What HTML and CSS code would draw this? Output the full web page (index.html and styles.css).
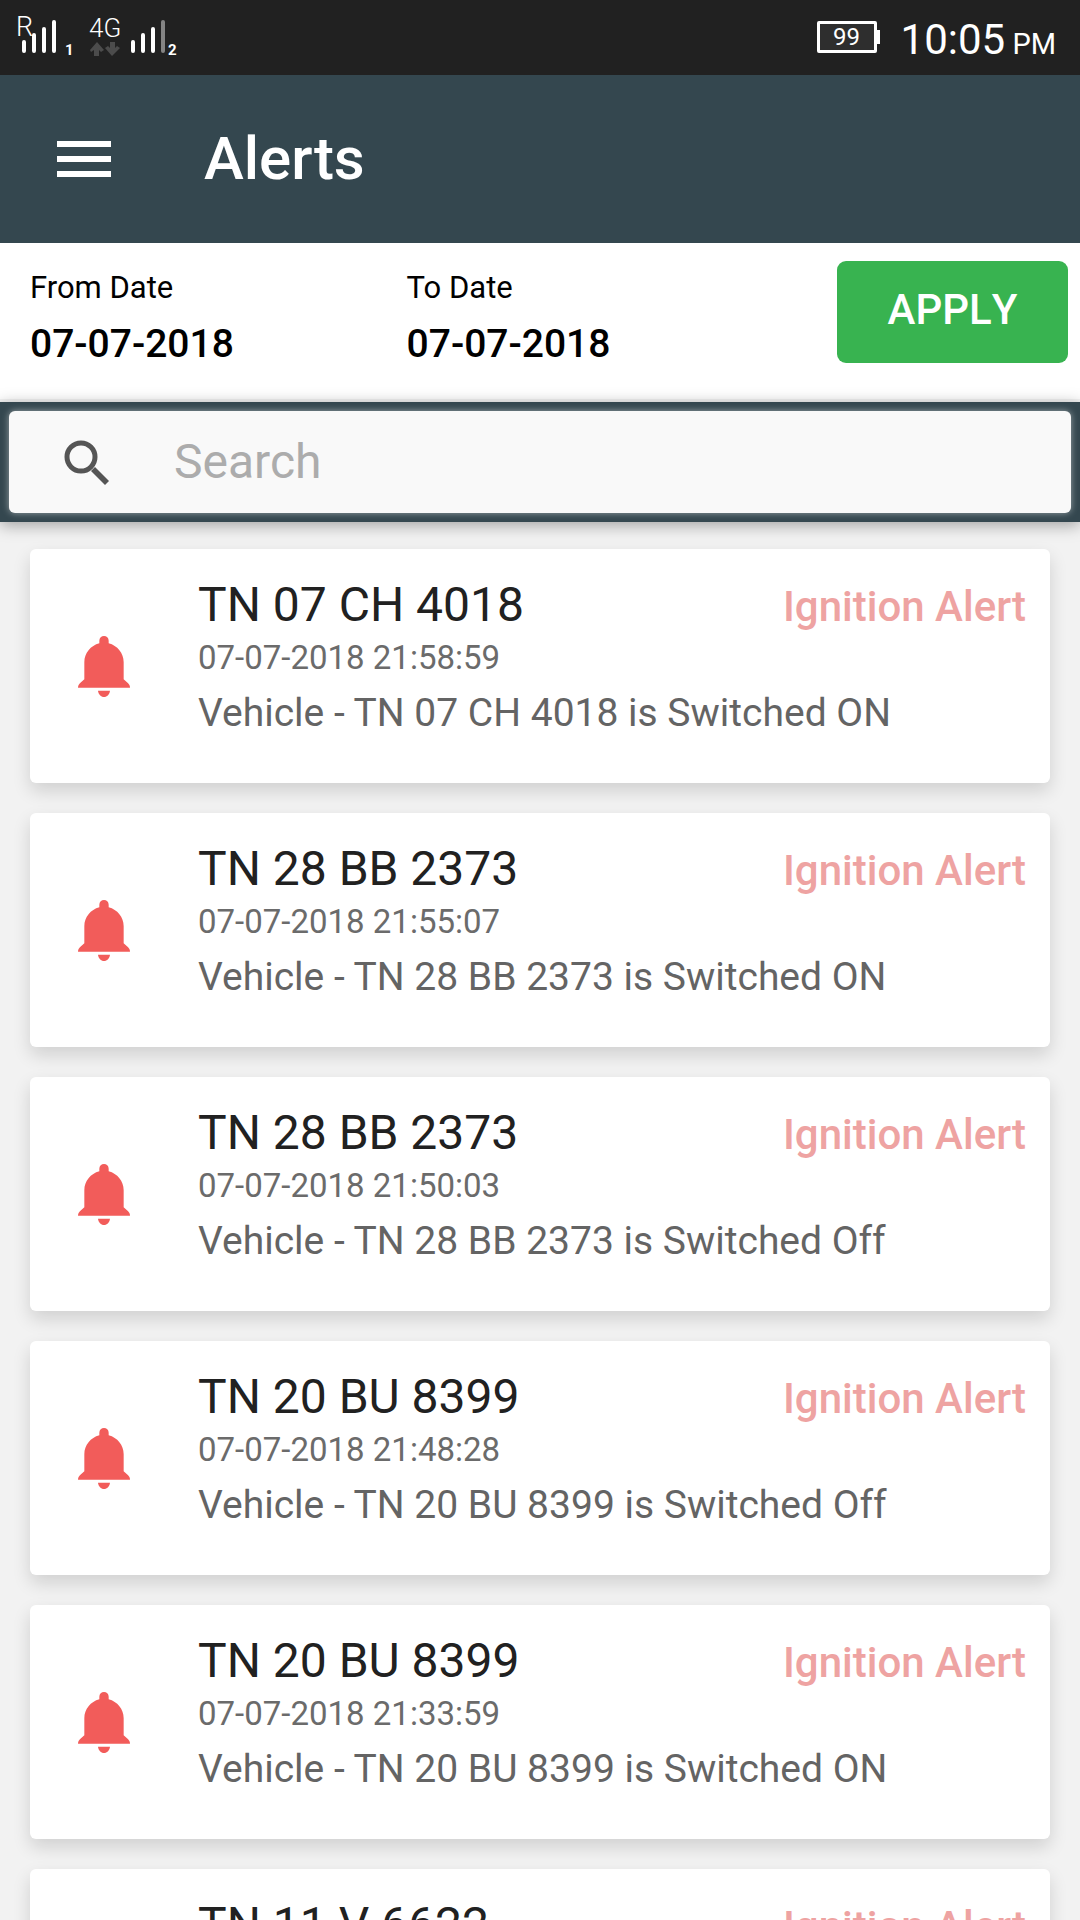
FILE: index.html
```html
<!DOCTYPE html>
<html lang="en">
<head>
<meta charset="utf-8">
<meta name="viewport" content="width=device-width, initial-scale=1">
<title>Alerts</title>
<link rel="stylesheet" href="styles.css">
</head>
<body>
<svg class="symbols" aria-hidden="true">
  <symbol id="bell" viewBox="0 0 156 183">
    <path d="M64 14a14 14 0 0 1 28 0v8c26 7 45 29 45 57v51l10 9c6 5 9 9 9 16H0c0-7 3-11 9-16l10-9V79c0-28 19-50 45-57z"/>
    <path d="M60 164h36c-1 11-9 19-18 19s-17-8-18-19z"/>
  </symbol>
</svg>

<div class="status">
  <svg class="status-signal" viewBox="0 0 180 60" role="img" aria-label="Signal strength">
    <g stroke="#fff" stroke-width="4" stroke-linecap="round">
      <path d="M24 42v9M34 35v16M44 29v22M54 22v29M133 42v9M143 35v16M153 29v22"/>
      <path stroke="#848484" d="M163 22v29"/>
    </g>
    <g fill="#4c4c4c">
      <path d="M97 42l7 8-3 2-2-2v6h-5v-6l-3 2-1-2z"/>
      <path d="M112 56l-7-8 3-2 2 2v-6h5v6l2-2 3 2z"/>
    </g>
    <text class="signal-roaming" x="16" y="36">R</text>
    <text class="signal-network" x="89" y="37">4G</text>
    <text class="signal-sim" x="65" y="55">1</text>
    <text class="signal-sim" x="168" y="55">2</text>
  </svg>
  <div class="status-right">
    <span class="battery">99</span>
    <span class="clock">10:05<small class="clock-period"> PM</small></span>
  </div>
</div>

<header class="appbar">
  <button class="menu" type="button" aria-label="Menu">
    <svg class="menu-icon" viewBox="0 0 54 36"><path d="M0 0h54v6H0zM0 15h54v6H0zM0 30h54v6H0z"/></svg>
  </button>
  <h1 class="title">Alerts</h1>
</header>

<form class="filter">
  <div class="field">
    <label class="field-label" for="from">From Date</label>
    <input class="field-input" id="from" type="text" value="07-07-2018">
  </div>
  <div class="field">
    <label class="field-label" for="to">To Date</label>
    <input class="field-input" id="to" type="text" value="07-07-2018">
  </div>
  <button class="apply" type="button">APPLY</button>
</form>

<div class="search">
  <div class="search-box">
    <svg class="search-icon" viewBox="0 0 45 45" aria-hidden="true">
      <circle cx="17" cy="17" r="14" fill="none" stroke="#555" stroke-width="5"/>
      <path d="M27 31l4-4 14 14-4 4z" fill="#555"/>
    </svg>
    <input class="search-input" type="search" placeholder="Search" aria-label="Search">
  </div>
</div>

<main class="list">
  <article class="card">
    <svg class="bell"><use href="#bell"/></svg>
    <div class="card-body">
      <div class="card-head"><h2 class="vehicle">TN 07 CH 4018</h2><span class="kind">Ignition Alert</span></div>
      <time class="time">07-07-2018 21:58:59</time>
      <p class="message">Vehicle - TN 07 CH 4018 is Switched ON</p>
    </div>
  </article>
  <article class="card">
    <svg class="bell"><use href="#bell"/></svg>
    <div class="card-body">
      <div class="card-head"><h2 class="vehicle">TN 28 BB 2373</h2><span class="kind">Ignition Alert</span></div>
      <time class="time">07-07-2018 21:55:07</time>
      <p class="message">Vehicle - TN 28 BB 2373 is Switched ON</p>
    </div>
  </article>
  <article class="card">
    <svg class="bell"><use href="#bell"/></svg>
    <div class="card-body">
      <div class="card-head"><h2 class="vehicle">TN 28 BB 2373</h2><span class="kind">Ignition Alert</span></div>
      <time class="time">07-07-2018 21:50:03</time>
      <p class="message">Vehicle - TN 28 BB 2373 is Switched Off</p>
    </div>
  </article>
  <article class="card">
    <svg class="bell"><use href="#bell"/></svg>
    <div class="card-body">
      <div class="card-head"><h2 class="vehicle">TN 20 BU 8399</h2><span class="kind">Ignition Alert</span></div>
      <time class="time">07-07-2018 21:48:28</time>
      <p class="message">Vehicle - TN 20 BU 8399 is Switched Off</p>
    </div>
  </article>
  <article class="card">
    <svg class="bell"><use href="#bell"/></svg>
    <div class="card-body">
      <div class="card-head"><h2 class="vehicle">TN 20 BU 8399</h2><span class="kind">Ignition Alert</span></div>
      <time class="time">07-07-2018 21:33:59</time>
      <p class="message">Vehicle - TN 20 BU 8399 is Switched ON</p>
    </div>
  </article>
  <article class="card">
    <div class="card-body">
      <div class="card-head"><h2 class="vehicle">TN 11 V 6622</h2><span class="kind">Ignition Alert</span></div>
    </div>
  </article>
</main>
</body>
</html>
```
FILE: styles.css
```css
* {
  box-sizing: border-box;
}

body {
  margin: 0;
  height: 100vh;
  display: flex;
  flex-direction: column;
  overflow: hidden;
  background: #f2f2f2;
  font-family: Roboto, "Liberation Sans", sans-serif;
  color: #000;
}

h1, h2, p {
  margin: 0;
}

button, input {
  margin: 0;
  padding: 0;
  border: 0;
  background: none;
  font: inherit;
  color: inherit;
}

.symbols {
  display: none;
}

/* Status bar */
.status {
  flex: none;
  display: flex;
  justify-content: space-between;
  padding-right: 24px;
  background: #212121;
  color: #fff;
}

.status-signal {
  width: 180px;
  height: 60px;
}

.status-signal text {
  fill: #fff;
}

.signal-roaming {
  font-size: 27px;
  font-weight: 300;
}

.signal-network {
  font-size: 26px;
  font-weight: 300;
}

.signal-sim {
  font-size: 15px;
  font-weight: 700;
}

.status-right {
  display: flex;
  align-items: flex-start;
  gap: 24px;
}

.battery {
  position: relative;
  margin-top: 21px;
  width: 60px;
  border: 3px solid #fff;
  border-radius: 2px;
  background: #2e2e2e;
  font-size: 24px;
  line-height: 26px;
  text-align: center;
}

.battery::after {
  content: "";
  position: absolute;
  left: 57px;
  top: 6px;
  width: 3px;
  height: 14px;
  background: #fff;
}

.clock {
  padding: 16px 0 11px;
  font-size: 42px;
  line-height: 48px;
}

.clock-period {
  font-size: 29px;
  line-height: 1;
}

/* App bar */
.appbar {
  flex: none;
  display: flex;
  align-items: center;
  gap: 93px;
  padding: 48px 57px;
  background: #34474f;
  color: #fff;
}

.menu-icon {
  display: block;
  width: 54px;
  height: 36px;
  fill: #fff;
}

.title {
  font-size: 60px;
  line-height: 72px;
  font-weight: 500;
}

/* Date filter */
.filter {
  flex: none;
  display: grid;
  grid-template-columns: 7fr 8fr auto;
  align-items: start;
  padding: 0 12px 25px 30px;
  border-bottom: 3px solid #f4f4f4;
  background: #fff;
}

.field {
  display: flex;
  flex-direction: column;
  gap: 8px;
  padding-top: 27px;
  min-width: 0;
}

.field-label {
  font-size: 31px;
  line-height: 36px;
}

.field-input {
  width: 100%;
  height: 60px;
  font-size: 39px;
  font-weight: 500;
}

.apply {
  min-width: 231px;
  margin-top: 18px;
  padding: 25px 48px 29px;
  border-radius: 9px;
  background: #38b350;
  color: #fff;
  font-size: 42px;
  line-height: 48px;
  font-weight: 500;
  font-kerning: none;
}

/* Search bar */
.search {
  flex: none;
  padding: 9px;
  background: #34474f;
  box-shadow: 0 3px 15px rgba(0, 0, 0, 0.35);
}

.search-box {
  display: flex;
  align-items: center;
  gap: 65px;
  padding-left: 55px;
  border-radius: 6px;
  background: #f9f9f9;
  box-shadow: 0 0 7px rgba(255, 255, 255, 0.5);
}

.search-icon {
  flex: none;
  width: 45px;
  height: 45px;
}

.search-input {
  flex: 1;
  min-width: 0;
  height: 102px;
  padding-bottom: 2px;
  font-size: 48px;
  outline: none;
}

.search-input::placeholder {
  color: #acacac;
  opacity: 1;
}

/* Alert list */
.list {
  flex: 1;
  min-height: 0;
  overflow: hidden;
  display: flex;
  flex-direction: column;
  gap: 30px;
  padding: 27px 30px 30px;
}

.card {
  flex: none;
  display: grid;
  grid-template-columns: 120px 1fr;
  align-items: center;
  padding: 0 24px 0 48px;
  border-radius: 6px;
  background: #fff;
  box-shadow: 0 8px 18px rgba(0, 0, 0, 0.14);
}

.bell {
  width: 52px;
  height: 61px;
  fill: #f25c5a;
}

.card-body {
  grid-column: 2;
  padding: 28px 0 39px;
}

.card-head {
  display: flex;
  align-items: baseline;
  justify-content: space-between;
  height: 57px;
}

.vehicle {
  font-size: 48px;
  line-height: 56px;
  font-weight: 400;
  color: #212121;
}

.kind {
  font-size: 42px;
  line-height: 48px;
  font-weight: 500;
  color: #eea3a2;
}

.time {
  display: block;
  font-size: 33px;
  line-height: 48px;
  color: #6b6b6b;
}

.message {
  font-size: 39px;
  line-height: 62px;
  color: #646464;
}
```
